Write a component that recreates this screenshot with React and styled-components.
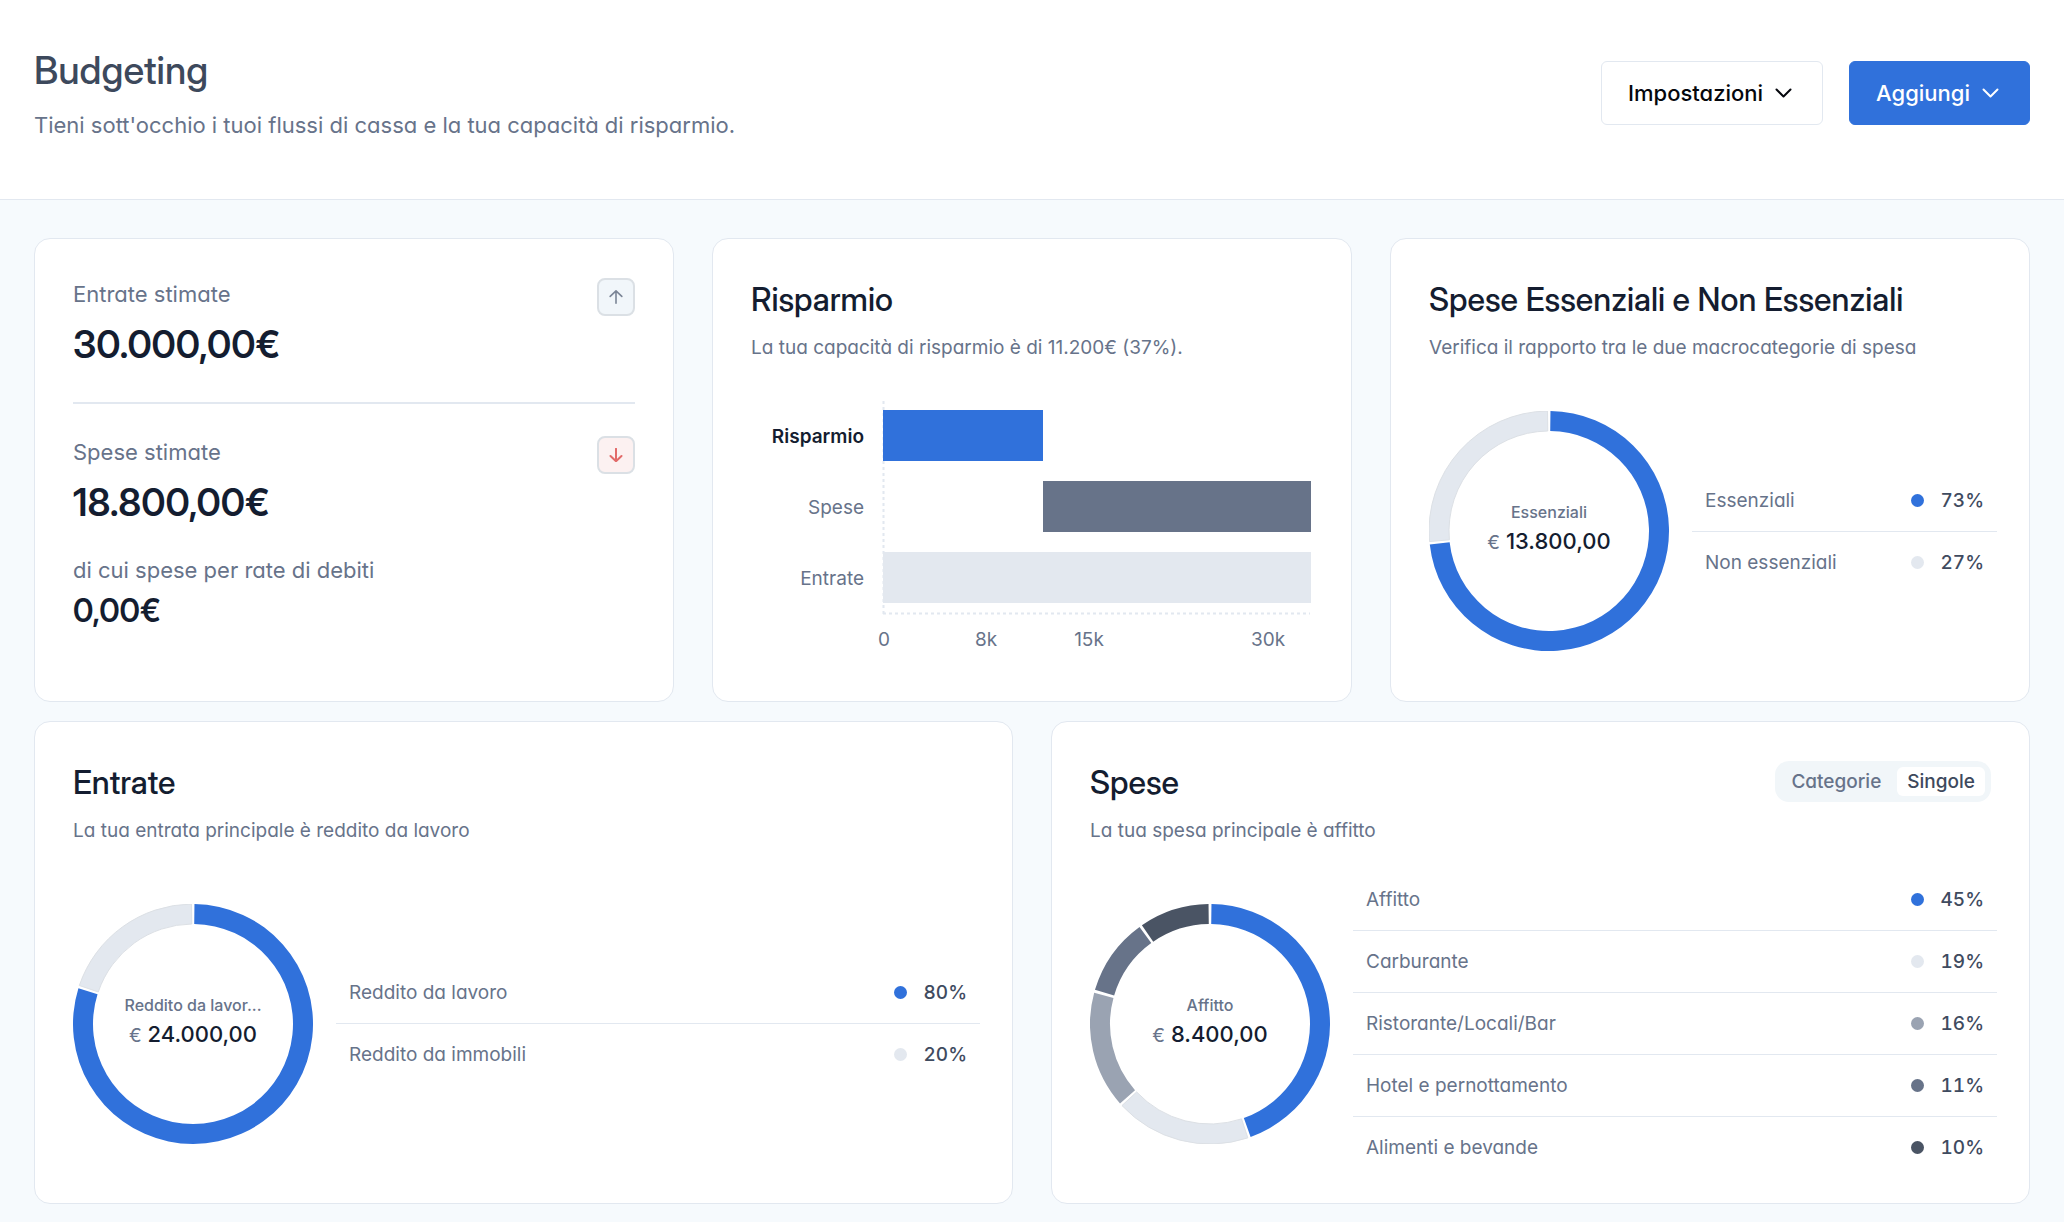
import React, { useState } from 'react';
import styled, { createGlobalStyle } from 'styled-components';

const BLUE = '#3071db';
const LIGHT = '#e3e8ef';
const GREY = '#9aa3b2';
const SLATE = '#677389';
const DARK = '#4a5464';

const GlobalStyle = createGlobalStyle`
  * {
    box-sizing: border-box;
  }

  body {
    margin: 0;
    background: #f6fafd;
    color: #141d30;
    font-family: Inter, "Liberation Sans", sans-serif;
    -webkit-font-smoothing: antialiased;
  }

  h1, h2, p, dl, dd, ul {
    margin: 0;
    padding: 0;
  }

  button {
    font-family: inherit;
    cursor: pointer;
  }
`;

const Header = styled.header`
  display: flex;
  align-items: center;
  justify-content: space-between;
  padding: 46px 34px 59px;
  background: #fff;
  border-bottom: 1px solid #e2e8f0;
`;

const PageTitle = styled.h1`
  margin-bottom: 16px;
  color: #3d495c;
  font-family: "Inter Display", Inter, sans-serif;
  font-size: 38px;
  font-weight: 500;
  line-height: 48px;
`;

const PageText = styled.p`
  color: #67738a;
  font-size: 22px;
  line-height: 30px;
  font-feature-settings: "cv11";
`;

const Actions = styled.div`
  display: flex;
  gap: 26px;
`;

const Button = styled.button`
  display: flex;
  align-items: center;
  gap: 12px;
  height: 64px;
  padding: 0 30px 0 26px;
  border: 1px solid ${props => (props.$primary ? BLUE : '#e2e8f0')};
  border-radius: 6px;
  background: ${props => (props.$primary ? BLUE : '#fff')};
  color: ${props => (props.$primary ? '#fff' : '#05070d')};
  font-size: 22px;
  font-weight: 500;
  font-feature-settings: "cv11";
`;

const Main = styled.main`
  display: flex;
  flex-direction: column;
  gap: 19px;
  padding: 38px 34px 18px;
`;

const Row = styled.div`
  display: grid;
  grid-template-columns: repeat(${props => props.$columns}, minmax(0, 1fr));
  gap: 38px;
`;

const Card = styled.section`
  display: flex;
  flex-direction: column;
  padding: 39px 38px 25px;
  border: 1px solid #e2e8f0;
  border-radius: 16px;
  background: #fff;
`;

const CardHead = styled.div`
  display: flex;
  align-items: flex-start;
  justify-content: space-between;
  margin-bottom: 23px;
`;

const CardTitle = styled.h2`
  margin-bottom: 12px;
  font-family: "Inter Display", Inter, sans-serif;
  font-size: 32px;
  font-weight: 500;
  line-height: 43px;
`;

const CardText = styled.p`
  color: #67738a;
  font-size: 19px;
  line-height: 30px;
  font-feature-settings: "cv11";
`;

const CardBody = styled.div`
  display: flex;
  flex: 1;
  align-items: center;
  gap: 23px;
`;

const Stat = styled.dl`
  display: flex;
  align-items: flex-start;
  justify-content: space-between;
`;

const StatLabel = styled.dt`
  color: #67738a;
  font-size: 22px;
  line-height: 32px;
  font-feature-settings: "cv11";
`;

const StatValue = styled.dd`
  margin-top: ${props => (props.$small ? '5px' : '10px')};
  font-family: "Inter Display", Inter, sans-serif;
  font-size: ${props => (props.$small ? '32px' : '38px')};
  font-weight: 600;
  line-height: ${props => (props.$small ? '40px' : '48px')};
`;

const Badge = styled.span`
  display: flex;
  align-items: center;
  justify-content: center;
  width: 38px;
  height: 38px;
  border: 2px solid #dbe0e5;
  border-radius: 8px;
  background: ${props => (props.$negative ? '#fcf1f1' : '#f1f6fa')};
  color: ${props => (props.$negative ? '#e26a69' : '#7b8596')};
`;

const Divider = styled.hr`
  width: 100%;
  height: 2px;
  margin: 34px 0 32px;
  border: 0;
  background: #e2e8f0;
`;

const Debts = styled.dl`
  && {
    margin-top: 28px;
  }
`;

const BarChart = styled.svg`
  display: block;
  width: 100%;
  font-size: 19px;
  fill: #67738a;
`;

const DonutBox = styled.div`
  display: grid;
  flex: none;
  width: 240px;
  height: 240px;

  > * {
    grid-area: 1 / 1;
  }
`;

const DonutCenter = styled.div`
  align-self: center;
  justify-self: center;
  padding-bottom: 2px;
  text-align: center;
`;

const DonutLabel = styled.p`
  color: #67738a;
  font-size: 16px;
  font-weight: 500;
  line-height: 24px;
`;

const DonutValue = styled.p`
  font-size: 22px;
  font-weight: 500;
  line-height: 34px;

  span {
    color: #67738a;
    font-size: 19px;
    font-weight: 400;
  }
`;

const Legend = styled.ul`
  flex: 1;
  list-style: none;

  && {
    margin-right: -6px;
  }
`;

const LegendItem = styled.li`
  display: flex;
  align-items: center;
  height: 62px;
  padding: 0 13px;
  color: #67738a;
  font-size: 19px;
  font-feature-settings: "cv11";

  &:not(:last-child) {
    border-bottom: 1px solid #e2e8f0;
  }

  &:last-child {
    height: 61px;
  }
`;

const Dot = styled.span`
  width: 13px;
  height: 13px;
  margin: 0 16px 0 auto;
  border-radius: 50%;
  background: ${props => props.$color};
`;

const Percent = styled.span`
  width: 44px;
  color: #3f4b5f;
  font-weight: 500;
  text-align: right;
  font-feature-settings: "tnum";
`;

const Toggle = styled.div`
  display: flex;
  gap: 6px;
  padding: 6px;
  border-radius: 14px;
  background: #f1f6f9;
`;

const ToggleButton = styled.button`
  height: 29px;
  padding: 0 10px;
  border: 0;
  border-radius: 6px;
  background: ${props => (props.$active ? '#fff' : 'transparent')};
  color: ${props => (props.$active ? '#3d495c' : '#67738a')};
  font-size: 19px;
  font-weight: 500;
  line-height: 29px;
  font-feature-settings: "cv11";
`;

const essentials = [
  { name: 'Essenziali', percent: 73, share: 73.4, color: BLUE },
  { name: 'Non essenziali', percent: 27, share: 26.6, color: LIGHT },
];

const incomes = [
  { name: 'Reddito da lavoro', percent: 80, share: 80, color: BLUE },
  { name: 'Reddito da immobili', percent: 20, share: 20, color: LIGHT },
];

const expenses = [
  { name: 'Affitto', percent: 45, share: 44.7, color: BLUE },
  { name: 'Carburante', percent: 19, share: 18.6, color: LIGHT },
  { name: 'Ristorante/Locali/Bar', percent: 16, share: 16.1, color: GREY },
  { name: 'Hotel e pernottamento', percent: 11, share: 10.8, color: SLATE },
  { name: 'Alimenti e bevande', percent: 10, share: 9.8, color: DARK },
];

const bars = [
  { name: 'Risparmio', x: 132, y: 24, width: 160, color: BLUE, bold: true },
  { name: 'Spese', x: 292, y: 95, width: 268, color: SLATE },
  { name: 'Entrate', x: 132, y: 166, width: 428, color: LIGHT },
];

const ticks = [
  { label: '0', x: 133 },
  { label: '8k', x: 235 },
  { label: '15k', x: 338 },
  { label: '30k', x: 517 },
];

const point = (radius, angle) => {
  const rad = (angle * Math.PI) / 180;
  return `${120 + radius * Math.sin(rad)} ${120 - radius * Math.cos(rad)}`;
};

// ring slice between two angles, clockwise from the top
const slicePath = (start, end) => {
  const large = end - start > 180 ? 1 : 0;
  return `M${point(120, start)} A120 120 0 ${large} 1 ${point(120, end)}
    L${point(100, end)} A100 100 0 ${large} 0 ${point(100, start)} Z`;
};

const Donut = ({ data, label, value }) => {
  let angle = 0;
  return (
    <DonutBox>
      <svg viewBox="0 0 240 240" width="240" height="240" aria-hidden="true">
        {data.map(item => {
          const start = angle;
          angle += item.share * 3.6;
          return (
            <path
              key={item.name}
              d={slicePath(start + 0.7, angle - 0.7)}
              fill={item.color}
              stroke={item.color === LIGHT ? '#dce0e5' : 'none'}
            />
          );
        })}
      </svg>
      <DonutCenter>
        <DonutLabel>{label}</DonutLabel>
        <DonutValue><span>€</span> {value}</DonutValue>
      </DonutCenter>
    </DonutBox>
  );
};

const ShareList = ({ data }) => (
  <Legend>
    {data.map(item => (
      <LegendItem key={item.name}>
        {item.name}
        <Dot $color={item.color} />
        <Percent>{item.percent}%</Percent>
      </LegendItem>
    ))}
  </Legend>
);

const Chevron = () => (
  <svg width="17" height="11" viewBox="0 0 17 11" fill="none" stroke="currentColor" strokeWidth="2" strokeLinecap="round" strokeLinejoin="round">
    <path d="M1.5 1.5l7 7 7-7" />
  </svg>
);

const Arrow = ({ down }) => (
  <svg width="14" height="14" viewBox="0 0 14 14" fill="none" stroke="currentColor" strokeWidth={down ? 2 : 1.6} strokeLinecap="round" strokeLinejoin="round">
    <path d={down ? 'M7 .8v12.4M1.5 8L7 13.2 12.5 8' : 'M7 13.2V.8M1.2 6.4L7 .8l5.8 5.6'} />
  </svg>
);

const SavingsChart = () => (
  <BarChart viewBox="0 0 562 290" role="img" aria-label="Risparmio, spese ed entrate">
    <path d="M132.5 15V228M132 227.5H559" stroke="#e2e8f0" strokeWidth="2" strokeDasharray="3 3" />
    {bars.map(bar => (
      <g key={bar.name}>
        <rect x={bar.x} y={bar.y} width={bar.width} height="51" fill={bar.color} />
        <text
          x="113"
          y={bar.y + 33}
          textAnchor="end"
          fontWeight={bar.bold ? 600 : 400}
          fill={bar.bold ? '#141d30' : '#67738a'}
        >
          {bar.name}
        </text>
      </g>
    ))}
    {ticks.map(tick => (
      <text key={tick.label} x={tick.x} y="260" textAnchor="middle">{tick.label}</text>
    ))}
  </BarChart>
);

const App = () => {
  const [view, setView] = useState('Singole');

  return (
    <React.Fragment>
      <GlobalStyle />
      <Header>
        <div>
          <PageTitle>Budgeting</PageTitle>
          <PageText>Tieni sott'occhio i tuoi flussi di cassa e la tua capacità di risparmio.</PageText>
        </div>
        <Actions>
          <Button type="button">Impostazioni <Chevron /></Button>
          <Button type="button" $primary>Aggiungi <Chevron /></Button>
        </Actions>
      </Header>
      <Main>
        <Row $columns={3}>
          <Card>
            <Stat>
              <div>
                <StatLabel>Entrate stimate</StatLabel>
                <StatValue>30.000,00€</StatValue>
              </div>
              <Badge><Arrow /></Badge>
            </Stat>
            <Divider />
            <Stat>
              <div>
                <StatLabel>Spese stimate</StatLabel>
                <StatValue>18.800,00€</StatValue>
              </div>
              <Badge $negative><Arrow down /></Badge>
            </Stat>
            <Debts>
              <StatLabel>di cui spese per rate di debiti</StatLabel>
              <StatValue $small>0,00€</StatValue>
            </Debts>
          </Card>
          <Card>
            <CardHead>
              <div>
                <CardTitle>Risparmio</CardTitle>
                <CardText>La tua capacità di risparmio è di 11.200€ (37%).</CardText>
              </div>
            </CardHead>
            <CardBody>
              <SavingsChart />
            </CardBody>
          </Card>
          <Card>
            <CardHead>
              <div>
                <CardTitle>Spese Essenziali e Non Essenziali</CardTitle>
                <CardText>Verifica il rapporto tra le due macrocategorie di spesa</CardText>
              </div>
            </CardHead>
            <CardBody>
              <Donut data={essentials} label="Essenziali" value="13.800,00" />
              <ShareList data={essentials} />
            </CardBody>
          </Card>
        </Row>
        <Row $columns={2}>
          <Card>
            <CardHead>
              <div>
                <CardTitle>Entrate</CardTitle>
                <CardText>La tua entrata principale è reddito da lavoro</CardText>
              </div>
            </CardHead>
            <CardBody>
              <Donut data={incomes} label="Reddito da lavor..." value="24.000,00" />
              <ShareList data={incomes} />
            </CardBody>
          </Card>
          <Card>
            <CardHead>
              <div>
                <CardTitle>Spese</CardTitle>
                <CardText>La tua spesa principale è affitto</CardText>
              </div>
              <Toggle>
                {['Categorie', 'Singole'].map(name => (
                  <ToggleButton
                    key={name}
                    type="button"
                    $active={view === name}
                    aria-pressed={view === name}
                    onClick={() => setView(name)}
                  >
                    {name}
                  </ToggleButton>
                ))}
              </Toggle>
            </CardHead>
            <CardBody>
              <Donut data={expenses} label="Affitto" value="8.400,00" />
              <ShareList data={expenses} />
            </CardBody>
          </Card>
        </Row>
      </Main>
    </React.Fragment>
  );
};

export default App;
